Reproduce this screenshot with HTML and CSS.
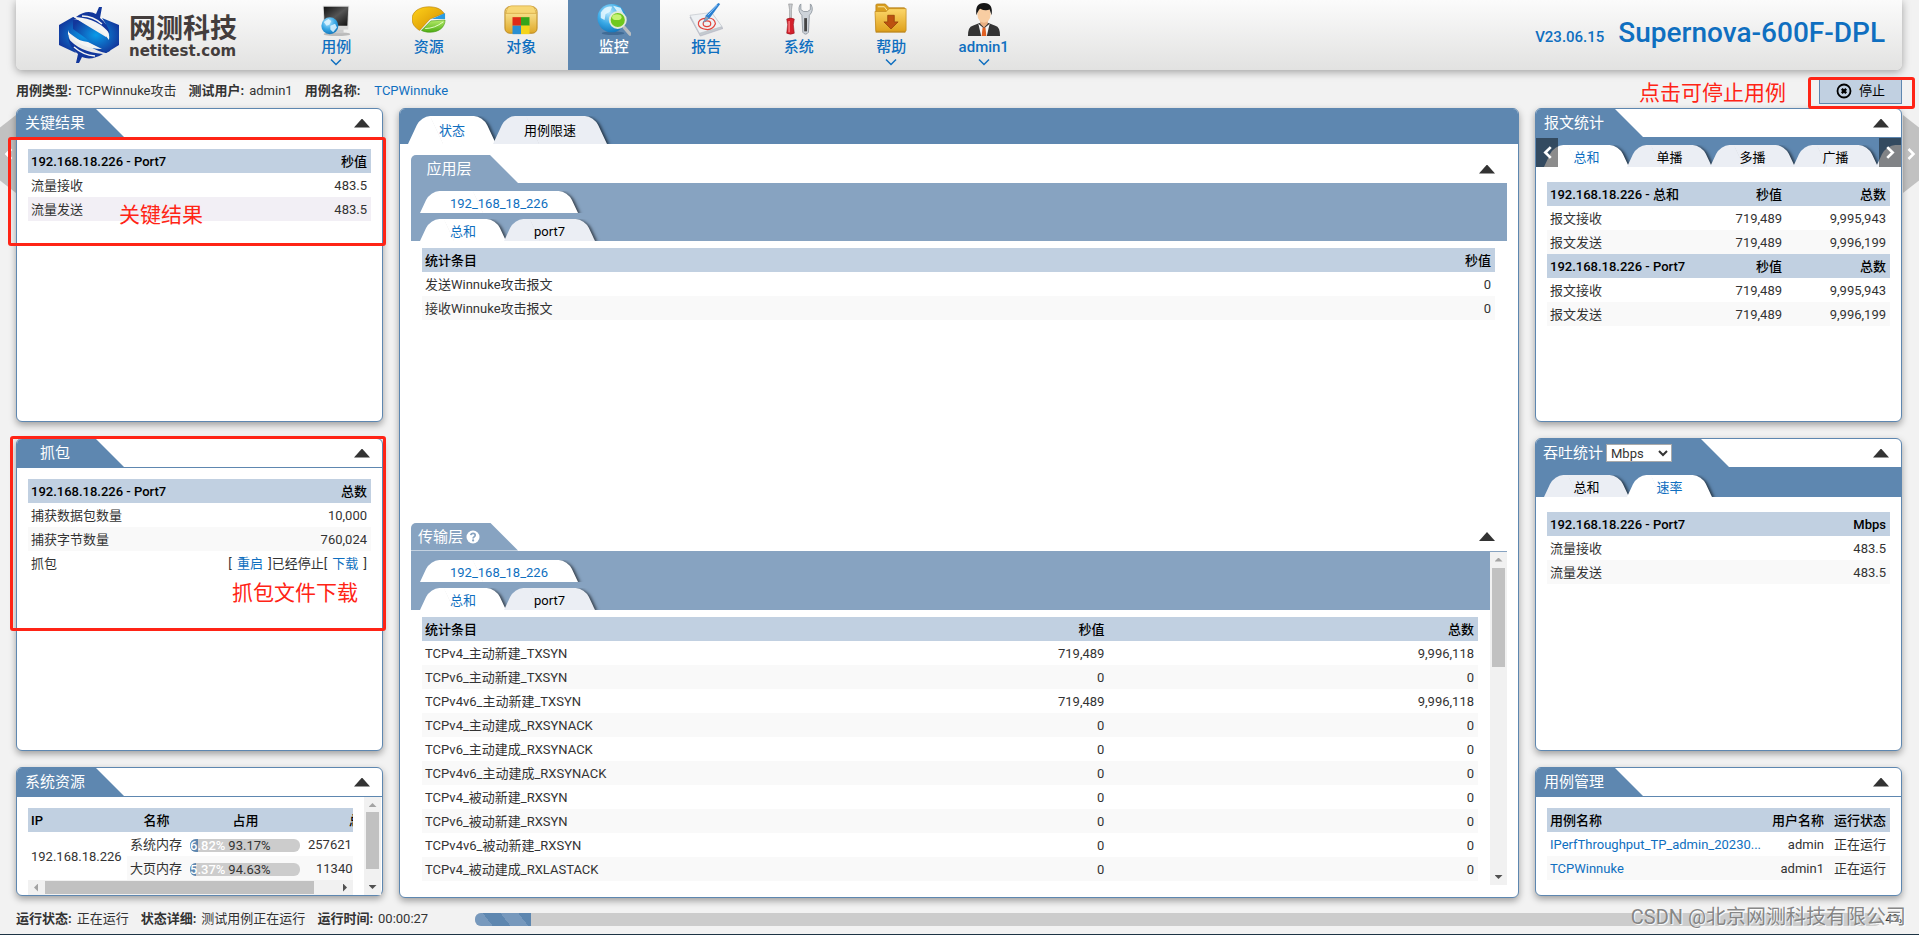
FILE: index.html
```html
<!DOCTYPE html>
<html lang="zh-CN">
<head>
<meta charset="utf-8">
<title>Supernova-600F-DPL</title>
<link rel="stylesheet" href="styles.css">
</head>
<body>
<header class="topbar">
  <a class="logo" href="#">
    <svg class="logo-mark" viewBox="0 0 60 56" aria-hidden="true">
      <defs><radialGradient id="lg" cx=".5" cy=".5" r=".55"><stop offset="0" stop-color="#0a9be8"/><stop offset="1" stop-color="#12379c"/></radialGradient></defs>
      <path d="M0 18 14 10 Q40 27 52 39L51 44 47 46Q34 44 9 25Q10 36 17 46L0 38Z" fill="url(#lg)"/>
      <path d="M14 10 47 30Q50 20 43 11L60 18V38L47 46 14 22Z" fill="url(#lg)"/>
      <path d="M9 23Q11 32 29 35L43 42Q22 42 9 27Z" fill="#f5f5f5"/>
      <path d="M14 12Q36 14 50 33Q51 27 47 19Q36 12 20 12Z" fill="#f5f5f5"/>
      <path d="M17 10Q28 2 37 7L40 0H43L41 11Q49 17 51 27Q40 12 17 10Z" fill="#12379c"/>
      <path d="M23 9Q34 9 43 17" fill="none" stroke="#f5f5f5" stroke-width="1.500"/>
      <path d="M44 47Q32 54 23 50L20 56H17L19 47Q11 41 9 31Q20 45 44 47Z" fill="#12379c"/>
      <path d="M15 40Q24 48 36 49" fill="none" stroke="#f5f5f5" stroke-width="1.500"/>
    </svg>
    <span class="logo-text"><span class="logo-cn">网测科技</span><span class="logo-en">netitest.com</span></span>
  </a>
  <nav class="nav">
    <a class="nav-item" href="#">
      <svg class="nav-icon" viewBox="0 0 36 36"><defs><linearGradient id="scr" x1="0" y1="0" x2="1" y2="1"><stop offset="0" stop-color="#111"/><stop offset=".5" stop-color="#555"/><stop offset="1" stop-color="#111"/></linearGradient><radialGradient id="glb" cx=".4" cy=".3" r=".8"><stop offset="0" stop-color="#b9e8ff"/><stop offset=".5" stop-color="#3aa9e6"/><stop offset="1" stop-color="#0b6cb3"/></radialGradient></defs><ellipse cx="19" cy="33" rx="14" ry="2" fill="#bbb"/><path d="M4 3H32L31 28H5Z" fill="#d8d8d8"/><path d="M5 4H31L30 24H6Z" fill="url(#scr)"/><path d="M18 28h8v4h-8z" fill="#ccc"/><circle cx="11.500" cy="24" r="9" fill="url(#glb)"/><path d="M5 20l5-3 3 2-2 4-3 1zM12 24l5-2 2 4-4 5-3-3z" fill="#dff5ff" opacity=".85"/></svg>
      <span>用例</span>
      <svg class="chev" viewBox="0 0 12 8"><path d="M1 1.500 6 6.500 11 1.500" /></svg>
    </a>
    <a class="nav-item" href="#">
      <svg class="nav-icon" viewBox="0 0 36 36"><defs><linearGradient id="yel" x1="0" y1="0" x2="1" y2="1"><stop offset="0" stop-color="#ffd21a"/><stop offset="1" stop-color="#d08a00"/></linearGradient><linearGradient id="grn" x1="0" y1="0" x2="0" y2="1"><stop offset="0" stop-color="#b7ec6a"/><stop offset="1" stop-color="#4cac12"/></linearGradient></defs><path d="M0 17C0 9 8 4 18 4S32 8 34 11L19 17 8 29C3 26 0 22 0 17Z" fill="url(#yel)" stroke="#b37a00" stroke-width=".6"/><path d="M21 17 35 10.500V17Z" fill="#2b9be0"/><path d="M20 19 35 18C35 26 28 31 19 31 15 31 12 30 10 29Z" fill="url(#grn)" stroke="#3f9410" stroke-width=".6"/><path d="M14 27Q24 27 33 20" stroke="#eaffcc" fill="none"/></svg>
      <span>资源</span>
    </a>
    <a class="nav-item" href="#">
      <svg class="nav-icon" viewBox="0 0 36 36"><defs><linearGradient id="box" x1="0" y1="0" x2="0" y2="1"><stop offset="0" stop-color="#fff0a8"/><stop offset="1" stop-color="#dfa828"/></linearGradient></defs><rect x="1" y="4" width="34" height="28" rx="5" fill="url(#box)" stroke="#b98519"/><path d="M3 7Q4 3 8 3H28Q32 3 33 7L34 11H2Z" fill="#f7d775" stroke="#c99832" stroke-width=".6"/><path d="M9 15h9v9H9z" fill="#df2b16"/><path d="M18 15h9v9h-9z" fill="#36a41b"/><path d="M9 24h9v9H9z" fill="#2a8fd2"/><path d="M18 24h9v9h-9z" fill="#f4d41a"/></svg>
      <span>对象</span>
    </a>
    <a class="nav-item active" href="#">
      <svg class="nav-icon" viewBox="0 0 36 36"><ellipse cx="17" cy="32" rx="12" ry="2" fill="#416b95"/><circle cx="15.500" cy="16" r="15" fill="url(#glb)"/><path d="M4 10Q9 2 16 4L14 9 9 12 8 18 4 16ZM17 3 25 5 28 11 22 10Z" fill="#e6f8ff" opacity=".85"/><path d="M29 26 35 33" stroke="#b8bcc0" stroke-width="3.500" stroke-linecap="round"/><circle cx="22" cy="18" r="8.500" fill="#6fc81d" stroke="#e2ead8" stroke-width="2"/><ellipse cx="21" cy="15" rx="5" ry="3" fill="#c5f272"/></svg>
      <span>监控</span>
    </a>
    <a class="nav-item" href="#">
      <svg class="nav-icon" viewBox="0 0 36 36"><path d="M1 15 25 12 36 27 12 35Z" fill="#c4cacf" stroke="#aab" stroke-width=".6"/><path d="M1 13 24 10 35 25 11 32Z" fill="#eef1f4" stroke="#b9bec4" stroke-width=".6"/><path d="M10 23Q9 17 18 16T28 22Q25 29 18 28T10 23ZM15 22q0-3 4-3t4 3-4 3-4-3" fill="none" stroke="#e2443c" stroke-width="1.300"/><path d="M31 0 18 13 15 21 22 16 33 1Z" fill="#2a7fd0"/><path d="M15 21 18 14 21 16Z" fill="#8fa3b5"/><path d="M30 2 20 13" stroke="#9fd0ff"/></svg>
      <span>报告</span>
    </a>
    <a class="nav-item" href="#">
      <svg class="nav-icon" viewBox="0 0 36 36"><path d="M7 1h4l-1 6v11H8V7Z" fill="#c9ccd0" stroke="#777" stroke-width=".5"/><path d="M5 17Q9 15 13 17L12 23 13 32Q9 34 5 32L6 23Z" fill="#d4202b" stroke="#901018" stroke-width=".6"/><path d="M7.500 19v12" stroke="#ff8d90" stroke-width="1.300"/><path d="M19 2Q16 8 21 13L22 31Q25 35 28 31L29 13Q34 8 31 2L30 1V7L27 9H23L20 7V1Z" fill="#cdd3d9" stroke="#78818a" stroke-width=".7"/><path d="M25 16v14" stroke="#444" stroke-width="3"/></svg>
      <span>系统</span>
    </a>
    <a class="nav-item" href="#">
      <svg class="nav-icon" viewBox="0 0 36 36"><defs><linearGradient id="fld" x1="0" y1="0" x2="0" y2="1"><stop offset="0" stop-color="#fcd76a"/><stop offset="1" stop-color="#e0a21d"/></linearGradient></defs><path d="M2 31V2Q2 1 4 1H12L16 5H32Q33 5 33 7V31Z" fill="#d99e1f" stroke="#b27b12" stroke-width=".7"/><path d="M4 4H11L14 8H32" stroke="#ffefb0" fill="none"/><path d="M1 9H13L16 6H34V29Q34 30 33 30H3Q2 30 2 29Z" fill="url(#fld)" stroke="#bd851a" stroke-width=".7"/><path d="M14.500 13h7v7h4L18 27.500 10.500 20h4z" fill="#bd5210" stroke="#8a3806" stroke-width=".7"/></svg>
      <span>帮助</span>
      <svg class="chev" viewBox="0 0 12 8"><path d="M1 1.500 6 6.500 11 1.500" /></svg>
    </a>
    <a class="nav-item" href="#">
      <svg class="nav-icon" viewBox="0 0 36 36"><path d="M1 35Q1 25 6 24L14 21H22L30 24Q35 25 35 35Z" fill="#333"/><path d="M12 22 18 27 24 22 21 35H15Z" fill="#f4f4f4"/><path d="M16.500 26h3l1 9h-5z" fill="#e06022"/><path d="M14 17h8v5l-4 4-4-4z" fill="#e9b184"/><ellipse cx="18" cy="12" rx="7" ry="9" fill="#f8cda2"/><path d="M10 13Q8 0 18 0T26 13L24 7Q19 9 14 6Q12 7 10 13Z" fill="#161616"/></svg>
      <span>admin1</span>
      <svg class="chev" viewBox="0 0 12 8"><path d="M1 1.500 6 6.500 11 1.500" /></svg>
    </a>
  </nav>
  <div class="product"><span class="version">V23.06.15</span><span class="model">Supernova-600F-DPL</span></div>
</header>

<div class="infobar">
  <p class="info"><b>用例类型:</b><span>TCPWinnuke攻击</span><b>测试用户:</b><span>admin1</span><b>用例名称:</b><a href="#">TCPWinnuke</a></p>
  <div class="stop-area">
    <span class="note note-stop">点击可停止用例</span>
    <div class="stop-wrap">
      <button class="stop" type="button"><svg viewBox="0 0 16 16" aria-hidden="true"><circle cx="8" cy="8" r="6.500" fill="none" stroke="#000" stroke-width="1.800"/><path d="M5.800 5.800l4.400 4.400M10.200 5.800l-4.400 4.400" stroke="#000" stroke-width="2.400"/></svg>停止</button>
      <span class="mark mark-stop"></span>
    </div>
  </div>
</div>

<main class="board">
  <button class="side side-left" type="button" aria-label="上一页"><svg viewBox="0 0 8 12"><path d="M7 1 2 6l5 5"/></svg></button>
  <button class="side side-right" type="button" aria-label="下一页"><svg viewBox="0 0 8 12"><path d="M1 1l5 5-5 5"/></svg></button>

  <div class="column">
    <section class="panel">
      <div class="head"><h2 class="title">关键结果</h2><button class="fold" type="button" aria-label="折叠"></button></div>
      <div class="body">
        <table>
          <thead><tr><th>192.168.18.226 - Port7</th><th class="num">秒值</th></tr></thead>
          <tbody><tr><td>流量接收</td><td class="num">483.5</td></tr><tr class="hover"><td>流量发送</td><td class="num">483.5</td></tr></tbody>
        </table>
      </div>
      <span class="mark mark-key"></span><span class="note note-key">关键结果</span>
    </section>

    <section class="panel">
      <div class="head"><h2 class="title">抓包</h2><button class="fold" type="button" aria-label="折叠"></button></div>
      <div class="body">
        <table>
          <thead><tr><th>192.168.18.226 - Port7</th><th class="num">总数</th></tr></thead>
          <tbody><tr><td>捕获数据包数量</td><td class="num">10,000</td></tr><tr><td>捕获字节数量</td><td class="num">760,024</td></tr><tr><td>抓包</td><td class="num">[ <a class="act" href="#">重启</a> ]已经停止[ <a class="act" href="#">下载</a> ]</td></tr></tbody>
        </table>
      </div>
      <span class="mark mark-cap"></span><span class="note note-cap">抓包文件下载</span>
    </section>

    <section class="panel">
      <div class="head"><h2 class="title">系统资源</h2><button class="fold" type="button" aria-label="折叠"></button></div>
      <div class="body scrolled">
        <div class="clip">
          <div class="clip-view">
            <table class="res">
              <thead><tr><th>IP</th><th class="mid">名称</th><th class="mid">占用</th><th class="num">总数</th></tr></thead>
              <tbody>
                <tr><td rowspan="2" class="ip">192.168.18.226</td><td>系统内存</td><td><div class="meter"><i style="width:6.82%"></i><b>6.82%</b><span>93.17%</span></div></td><td>257621</td></tr>
                <tr><td>大页内存</td><td><div class="meter"><i style="width:5.37%"></i><b>5.37%</b><span>94.63%</span></div></td><td class="pad">11340</td></tr>
              </tbody>
            </table>
          </div>
          <div class="hbar"><i class="ar ar-l"></i><i class="hthumb"></i><i class="ar ar-r"></i></div>
        </div>
        <div class="vbar"><i class="ar ar-u"></i><i class="vthumb tall"></i><i class="ar ar-d"></i></div>
      </div>
    </section>
  </div>

  <section class="panel center">
    <div class="tabs main-tabs"><a class="tab on" href="#">状态</a><a class="tab" href="#">用例限速</a></div>
    <div class="center-body">
      <section class="layer layer-app">
        <div class="head"><h2 class="title">应用层</h2><button class="fold" type="button" aria-label="折叠"></button></div>
        <div class="band">
          <div class="tabs"><a class="tab on" href="#">192_168_18_226</a></div>
          <div class="tabs"><a class="tab on" href="#">总和</a><a class="tab" href="#">port7</a></div>
        </div>
        <div class="layer-body">
          <table>
            <thead><tr><th>统计条目</th><th class="num">秒值</th></tr></thead>
            <tbody><tr><td>发送Winnuke攻击报文</td><td class="num">0</td></tr><tr><td>接收Winnuke攻击报文</td><td class="num">0</td></tr></tbody>
          </table>
        </div>
      </section>
      <section class="layer layer-tcp">
        <div class="head"><h2 class="title">传输层 <svg class="help" viewBox="0 0 14 14"><circle cx="7" cy="7" r="6.500" fill="#fff"/><path d="M4.800 5.200Q5 3.400 7.100 3.400T9.200 5.200Q9.200 6.200 8 6.900 7.100 7.400 7.100 8.400" fill="none" stroke="#87a3c1" stroke-width="1.700"/><circle cx="7.100" cy="10.400" r="1.100" fill="#87a3c1"/></svg></h2><button class="fold" type="button" aria-label="折叠"></button></div>
        <div class="scroller">
          <div class="scroll-view">
            <div class="band">
              <div class="tabs"><a class="tab on" href="#">192_168_18_226</a></div>
              <div class="tabs"><a class="tab on" href="#">总和</a><a class="tab" href="#">port7</a></div>
            </div>
            <div class="layer-body">
              <table class="tcp">
                <thead><tr><th>统计条目</th><th class="num">秒值</th><th class="num">总数</th></tr></thead>
                <tbody>
                  <tr><td>TCPv4_主动新建_TXSYN</td><td class="num">719,489</td><td class="num">9,996,118</td></tr>
                  <tr><td>TCPv6_主动新建_TXSYN</td><td class="num">0</td><td class="num">0</td></tr>
                  <tr><td>TCPv4v6_主动新建_TXSYN</td><td class="num">719,489</td><td class="num">9,996,118</td></tr>
                  <tr><td>TCPv4_主动建成_RXSYNACK</td><td class="num">0</td><td class="num">0</td></tr>
                  <tr><td>TCPv6_主动建成_RXSYNACK</td><td class="num">0</td><td class="num">0</td></tr>
                  <tr><td>TCPv4v6_主动建成_RXSYNACK</td><td class="num">0</td><td class="num">0</td></tr>
                  <tr><td>TCPv4_被动新建_RXSYN</td><td class="num">0</td><td class="num">0</td></tr>
                  <tr><td>TCPv6_被动新建_RXSYN</td><td class="num">0</td><td class="num">0</td></tr>
                  <tr><td>TCPv4v6_被动新建_RXSYN</td><td class="num">0</td><td class="num">0</td></tr>
                  <tr><td>TCPv4_被动建成_RXLASTACK</td><td class="num">0</td><td class="num">0</td></tr>
                </tbody>
              </table>
            </div>
          </div>
          <div class="vbar"><i class="ar ar-u"></i><i class="vthumb"></i><i class="ar ar-d"></i></div>
        </div>
      </section>
    </div>
  </section>

  <div class="column">
    <section class="panel">
      <div class="head plain"><h2 class="title">报文统计</h2><button class="fold" type="button" aria-label="折叠"></button></div>
      <div class="strip">
        <div class="tabs even"><a class="tab on" href="#">总和</a><a class="tab" href="#">单播</a><a class="tab" href="#">多播</a><a class="tab" href="#">广播</a><a class="tab" href="#" aria-label="更多"></a></div>
        <button class="shift shift-l" type="button" aria-label="向左"><svg viewBox="0 0 8 12"><path d="M7 1 2 6l5 5"/></svg></button>
        <button class="shift shift-r" type="button" aria-label="向右"><svg viewBox="0 0 8 12"><path d="M1 1l5 5-5 5"/></svg></button>
      </div>
      <div class="body roomy">
        <table class="three">
          <thead><tr><th>192.168.18.226 - 总和</th><th class="num">秒值</th><th class="num">总数</th></tr></thead>
          <tbody><tr><td>报文接收</td><td class="num">719,489</td><td class="num">9,995,943</td></tr><tr><td>报文发送</td><td class="num">719,489</td><td class="num">9,996,199</td></tr></tbody>
        </table>
        <table class="three">
          <thead><tr><th>192.168.18.226 - Port7</th><th class="num">秒值</th><th class="num">总数</th></tr></thead>
          <tbody><tr><td>报文接收</td><td class="num">719,489</td><td class="num">9,995,943</td></tr><tr><td>报文发送</td><td class="num">719,489</td><td class="num">9,996,199</td></tr></tbody>
        </table>
      </div>
    </section>

    <section class="panel">
      <div class="head plain"><h2 class="title"><label for="unit">吞吐统计</label><select id="unit" class="unit"><option>Mbps</option></select></h2><button class="fold" type="button" aria-label="折叠"></button></div>
      <div class="strip">
        <div class="tabs even"><a class="tab" href="#">总和</a><a class="tab on" href="#">速率</a></div>
      </div>
      <div class="body roomy">
        <table>
          <thead><tr><th>192.168.18.226 - Port7</th><th class="num">Mbps</th></tr></thead>
          <tbody><tr><td>流量接收</td><td class="num">483.5</td></tr><tr><td>流量发送</td><td class="num">483.5</td></tr></tbody>
        </table>
      </div>
    </section>

    <section class="panel">
      <div class="head"><h2 class="title">用例管理</h2><button class="fold" type="button" aria-label="折叠"></button></div>
      <div class="body">
        <table class="cases">
          <thead><tr><th>用例名称</th><th class="num">用户名称</th><th class="num">运行状态</th></tr></thead>
          <tbody><tr><td><a href="#">IPerfThroughput_TP_admin_20230...</a></td><td class="num">admin</td><td class="num">正在运行</td></tr><tr><td><a href="#">TCPWinnuke</a></td><td class="num">admin1</td><td class="num">正在运行</td></tr></tbody>
        </table>
      </div>
    </section>
  </div>
</main>

<footer class="footer">
  <p class="info"><b>运行状态:</b><span>正在运行</span><b>状态详细:</b><span>测试用例正在运行</span><b>运行时间:</b><span>00:00:27</span></p>
  <div class="progress"><i style="width:4%"></i></div>
  <span class="percent">4%</span>
  <span class="watermark">CSDN @北京网测科技有限公司</span>
</footer>
</body>
</html>
```
FILE: styles.css
```css
* { box-sizing: border-box; }

body {
  margin: 0;
  height: 100vh;
  min-height: 760px;
  display: flex;
  flex-direction: column;
  background: #f2f2f2;
  border-bottom: 1px solid #1d3444;
  color: #333;
  font: 13px/20px Roboto, "Noto Sans CJK SC", sans-serif;
  overflow-x: hidden;
}

a { color: #0f6fc0; text-decoration: none; }
button { font: inherit; padding: 0; border: 0; background: none; }
p, h2 { margin: 0; }
svg { display: block; }

/* top bar */
.topbar {
  display: flex;
  align-items: stretch;
  height: 70px;
  margin: 0 17px 0 16px;
  border-radius: 0 0 6px 6px;
  background: linear-gradient(#fbfbfb, #e2e2e1);
  box-shadow: 0 2px 8px rgba(0, 0, 0, .35);
}
.logo { display: flex; gap: 10px; width: 274px; padding: 7px 0 0 43px; }
.logo-mark { width: 60px; height: 56px; }
.logo-text { display: flex; flex-direction: column; padding-top: 7px; color: #433d3c; }
.logo-cn { font-size: 27px; line-height: 30px; font-weight: 700; }
.logo-en { font: bold 15px/14px "DejaVu Sans", sans-serif; }
.nav { display: flex; width: 740px; }
.nav-item {
  flex: 1;
  display: flex;
  flex-direction: column;
  align-items: center;
  padding-top: 3px;
  font-size: 15px;
  line-height: 20px;
  font-weight: 500;
}
.nav-item.active { background: #5e87b0; color: #fff; }
.nav-icon { width: 34px; height: 34px; }
.chev { width: 12px; height: 8px; margin-top: 1px; fill: none; stroke: #0f6fc0; stroke-width: 1.5; }
.product {
  display: flex;
  align-items: baseline;
  gap: 14px;
  margin-left: auto;
  padding: 14px 17px 0 0;
  color: #0f6fc0;
}
.version { font-size: 15px; font-weight: 500; }
.model { font-size: 28px; line-height: 38px; font-weight: 500; }

/* information row */
.infobar {
  display: flex;
  justify-content: space-between;
  align-items: center;
  height: 38px;
  padding: 4px 17px 0 16px;
}
.info { display: flex; white-space: nowrap; }
.info b { font-weight: 700; margin-right: 5px; }
.info span { margin-right: 12px; }
.info a { margin-left: 9px; }
.stop-area { display: flex; align-items: center; gap: 33px; }
.stop-wrap { position: relative; }
.stop {
  display: flex;
  align-items: center;
  justify-content: center;
  gap: 7px;
  width: 83px;
  height: 25px;
  border: 1px solid #5e87b0;
  background: #c1d0e1;
  color: #000;
}
.stop svg { width: 16px; height: 16px; }

/* annotations */
.mark { position: absolute; border: 3px solid #ff2416; border-radius: 3px; pointer-events: none; z-index: 5; }
.note { color: #ff2416; font-size: 21px; line-height: 24px; white-space: nowrap; }
.note-stop { padding-top: 4px; }
.mark-stop { inset: -2px -13px -5px -11px; }
.mark-key { left: -9px; right: -4px; top: 28px; height: 109px; }
.note-key { position: absolute; left: 102px; top: 94px; }
.mark-cap { left: -7px; right: -4px; top: -3px; height: 195px; }
.note-cap { position: absolute; right: 24px; top: 142px; }

/* board */
.board {
  position: relative;
  flex: 1 1 0;
  min-height: 0;
  display: grid;
  grid-template-columns: minmax(0, 367fr) minmax(0, 1120fr) minmax(0, 367fr);
  grid-template-rows: minmax(0, 1fr);
  gap: 16px;
  padding: 0 17px 0 16px;
}
.column {
  display: grid;
  grid-template-rows: minmax(0, 314fr) minmax(0, 313fr) minmax(0, 129fr);
  gap: 16px;
  padding-bottom: 2px;
}
.panel {
  position: relative;
  display: flex;
  flex-direction: column;
  min-width: 0;
  min-height: 0;
  border: 1px solid #5e87b0;
  border-radius: 6px;
  background: #fff;
  box-shadow: 0 3px 7px rgba(0, 0, 0, .35);
}
.side { position: absolute; top: 7px; width: 16px; height: 78px; background: #c1c1c1; }
.side svg { width: 9px; height: 12px; margin: 0 auto; fill: none; stroke: #fff; stroke-width: 2.5; }
.side-left { left: 0; clip-path: polygon(100% 0, 100% 100%, 0 84%, 0 16%); }
.side-right { right: 0; clip-path: polygon(0 0, 0 100%, 100% 84%, 100% 16%); }

.head {
  display: flex;
  flex: none;
  justify-content: space-between;
  align-items: center;
  height: 29px;
  padding-right: 12px;
  border-bottom: 1px solid #5e87b0;
}
.head.plain { height: 28px; border-bottom: 0; }
.title {
  display: flex;
  align-items: center;
  justify-content: center;
  gap: 3px;
  min-width: 107px;
  height: 28px;
  padding: 0 35px 0 4px;
  border-top-left-radius: 5px;
  background: #5e87b0;
  clip-path: polygon(0 0, calc(100% - 28px) 0, 100% 100%, 0 100%);
  color: #fff;
  font-size: 15px;
  line-height: 20px;
  font-weight: 400;
}
.title:has(.unit) { padding: 0 57px 0 7px; }
.unit {
  width: 66px;
  height: 18px;
  padding: 0;
  border: 1px solid #aaa;
  background: #fff;
  color: #333;
  font: 13px/16px Roboto, sans-serif;
}
.fold { width: 16px; height: 9px; background: #333; clip-path: polygon(50% 0, 100% 100%, 0 100%); }
.body { padding: 11px; min-height: 0; }
.body.roomy { padding-top: 15px; }

/* tables */
table { width: 100%; border-collapse: collapse; table-layout: fixed; }
th, td { height: 24px; padding: 2px 4px 0 3px; text-align: left; white-space: nowrap; line-height: 20px; }
th { background: #c1d0e1; color: #000; font-weight: 500; }
tbody tr:nth-child(even) td { background: #f9f9f9; }
tbody tr.hover:nth-child(even) td { background: #f2eff5; }
th.num, td.num { text-align: right; }
.act { margin: 0 2px; }
.three th:nth-child(2) { width: 96px; }
.three th:nth-child(3) { width: 104px; }
.cases th:nth-child(2) { width: 62px; }
.cases th:nth-child(3) { width: 62px; }
.tcp th:nth-child(2) { width: 35%; }
.tcp th:nth-child(3) { width: 35%; }

/* tabs */
.tabs { display: flex; flex: none; height: 22px; overflow: hidden; }
.tab {
  position: relative;
  isolation: isolate;
  margin-right: -2px;
  padding: 0 30px;
  color: #000;
  line-height: 26px;
  white-space: nowrap;
}
.tab.on { color: #0f6fc0; }
.tab::before, .tab::after {
  content: "";
  position: absolute;
  z-index: -1;
  top: 0;
  bottom: 0;
  width: 60%;
  background: #ebeef4;
}
.tab::before { left: 0; border-top-left-radius: 9px; transform: skewX(-25deg); transform-origin: left bottom; }
.tab::after {
  right: 0;
  border-top-right-radius: 9px;
  transform: skewX(25deg);
  transform-origin: right bottom;
  box-shadow: 2px 1px 3px rgba(0, 0, 0, .6);
  clip-path: inset(0 -8px 0 0);
}
.tab.on::before, .tab.on::after { background: #fff; }
.strip { position: relative; flex: none; height: 30px; padding: 8px 0 0 8px; background: #5e87b0; overflow: hidden; }
.even .tab { flex: none; width: 85px; padding: 0; text-align: center; }
.shift { position: absolute; top: 1px; bottom: 0; width: 22px; background: rgba(0, 0, 0, .45); }
.shift svg { width: 9px; height: 13px; margin: 0 auto; fill: none; stroke: #fff; stroke-width: 2.5; }
.shift-l { left: 0; }
.shift-r { right: 0; }

/* centre */
.main-tabs { height: 35px; padding: 7px 0 0 8px; border-radius: 5px 5px 0 0; background: #5e87b0; }
.main-tabs .tab { line-height: 30px; padding: 0 31px; margin-right: -3px; }
.center-body { flex: 1; display: flex; flex-direction: column; padding: 11px 11px 12px; min-height: 0; }
.layer { display: flex; flex-direction: column; min-height: 0; }
.layer-app { flex: 368 1 0; }
.layer-tcp { flex: 363 1 0; }
.layer .head { height: 28px; border-bottom: 0; }
.layer .title { background: #87a3c1; }
.band { display: flex; flex-direction: column; gap: 6px; height: 58px; padding: 8px 0 0 9px; background: #87a3c1; }
.layer-body { padding: 7px 12px 0 11px; }
.help { width: 14px; height: 14px; }
.scroller { flex: 1 1 0; display: flex; min-height: 0; border-top: 1px solid #87a3c1; }
.scroll-view { flex: 1; overflow: hidden; }

/* scroll bars */
.vbar {
  display: flex;
  flex-direction: column;
  align-items: center;
  width: 17px;
  padding: 6px 2px;
  background: #f1f1f1;
}
.vthumb { width: 13px; height: 99px; margin: 6px 0 auto; background: #c1c1c1; }
.vthumb.tall { height: 57px; margin-top: 5px; }
.ar { width: 8px; height: 4px; flex: none; background: #505050; }
.ar-u { background: #a3a3a3; clip-path: polygon(50% 0, 100% 100%, 0 100%); }
.ar-d { clip-path: polygon(0 0, 100% 0, 50% 100%); }
.ar-l, .ar-r { width: 4px; height: 8px; }
.ar-l { background: #a3a3a3; clip-path: polygon(100% 0, 100% 100%, 0 50%); }
.ar-r { clip-path: polygon(0 0, 100% 50%, 0 100%); }
.hbar { display: flex; flex: none; align-items: center; height: 15px; padding: 0 6px; background: #f1f1f1; }
.hthumb { width: 86%; height: 13px; margin: 0 auto 0 7px; background: #c1c1c1; }

/* system resources */
.scrolled { flex: 1; display: flex; gap: 11px; padding: 0 1px 0 11px; }
.clip { flex: 1; min-width: 0; display: flex; flex-direction: column; padding-top: 11px; }
.clip-view { overflow: hidden; }
.res { width: 351px; }
.res th:nth-child(1) { width: 99px; }
.res th:nth-child(2) { width: 60px; }
.res th:nth-child(3) { width: 118px; }
.res th.mid { text-align: center; }
.res td { padding-right: 0; }
.res tbody .ip { background: #fff; }
.res .pad { padding-left: 11px; }
.meter {
  position: relative;
  display: flex;
  gap: 3px;
  width: 110px;
  height: 13px;
  border-radius: 6px;
  background: #ccc;
  line-height: 14px;
  overflow: hidden;
}
.meter i { position: absolute; left: 0; top: 0; bottom: 0; background: #5e87b0; }
.meter b { position: relative; color: #fff; font-weight: 500; }

/* footer */
.footer { position: relative; display: flex; align-items: center; height: 36px; padding: 6px 17px 0 16px; }
.progress { flex: 1; height: 13px; margin-left: 35px; border-radius: 6px; background: #ccc; overflow: hidden; }
.progress i {
  display: block;
  height: 100%;
  background: repeating-linear-gradient(52deg, #7799bd 0 14px, #5e87b0 14px 28px);
}
.percent { margin-left: 4px; }
.watermark {
  position: absolute;
  right: 13px;
  top: 6px;
  color: rgba(120, 120, 120, .9);
  text-shadow: 1px 1px 1px #fff;
  font-size: 20px;
  line-height: 26px;
}
```
